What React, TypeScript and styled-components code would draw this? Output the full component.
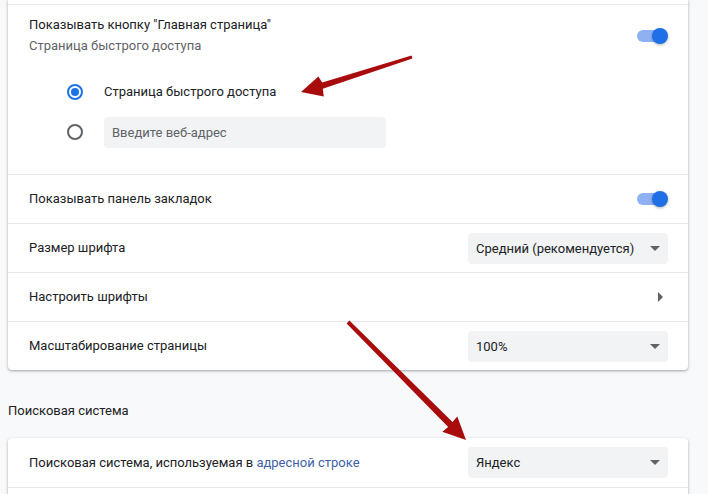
import React from "react";
import styled, { createGlobalStyle } from "styled-components";

const Global = createGlobalStyle`
  html, body { margin: 0; padding: 0; background: #f8f9fa; }
  body { font-family: Roboto, "Noto Sans", Arial, sans-serif; font-size: 13px; color: #202124; }
  * { box-sizing: border-box; }
`;

const Page = styled.div`
  position: relative;
  width: 708px;
  height: 494px;
  overflow: hidden;
  padding: 0 20px 0 8px;
`;

const Card = styled.div<{ $top?: number }>`
  background: #fff;
  border-radius: 4px;
  box-shadow: 0 1px 2px 0 rgba(60, 64, 67, 0.3), 0 1px 3px 1px rgba(60, 64, 67, 0.12);
  margin-top: ${(p) => p.$top ?? 0}px;
`;

const TopCard = styled(Card)`
  border-top-left-radius: 0;
  border-top-right-radius: 0;
  padding-top: 4px;
`;

const Row = styled.div<{ $first?: boolean }>`
  display: flex;
  align-items: center;
  justify-content: space-between;
  min-height: 49px;
  padding: 0 20px 0 21px;
  border-top: ${(p) => (p.$first ? "none" : "1px solid #e6e8eb")};
`;

const HomeRow = styled.div`
  border-top: 1px solid #e6e8eb;
  padding: 10px 20px 22px 21px;
`;

const HomeHead = styled.div`
  display: flex;
  align-items: center;
  justify-content: space-between;
`;

const Label = styled.div`
  line-height: 20px;
  color: #202124;
`;

const Secondary = styled.div`
  line-height: 20px;
  margin-top: 1px;
  color: #5f6368;
`;

const RadioGroup = styled.div`
  display: flex;
  flex-direction: column;
  padding-left: 38px;
  margin-top: 16px;
`;

const RadioRow = styled.div`
  display: flex;
  align-items: center;
  height: 40px;
  gap: 21px;
`;

const Radio = styled.span<{ $checked?: boolean }>`
  width: 16px;
  height: 16px;
  border-radius: 50%;
  border: 2px solid ${(p) => (p.$checked ? "#1a73e8" : "#5f6368")};
  display: flex;
  align-items: center;
  justify-content: center;
  flex: none;
  &::after {
    content: "";
    width: 8px;
    height: 8px;
    border-radius: 50%;
    background: ${(p) => (p.$checked ? "#1a73e8" : "transparent")};
  }
`;

const UrlInput = styled.div`
  width: 282px;
  height: 31px;
  border-radius: 4px;
  background: #f1f3f4;
  color: #5f6368;
  display: flex;
  align-items: center;
  padding-left: 8px;
`;

const Toggle = styled.span`
  position: relative;
  width: 31px;
  height: 16px;
  display: inline-block;
  flex: none;
  &::before {
    content: "";
    position: absolute;
    left: 0;
    top: 2px;
    width: 28px;
    height: 12px;
    border-radius: 6px;
    background: #8fb1f3;
  }
  &::after {
    content: "";
    position: absolute;
    right: 0;
    top: 0;
    width: 16px;
    height: 16px;
    border-radius: 50%;
    background: #1f6fe6;
    box-shadow: 0 1px 3px rgba(0, 0, 0, 0.3);
  }
`;

const Select = styled.div`
  width: 200px;
  height: 31px;
  border-radius: 4px;
  background: #f1f3f4;
  display: flex;
  align-items: center;
  justify-content: space-between;
  padding: 0 8px 0 8px;
  color: #202124;
`;

const DownArrow = styled.span`
  width: 0;
  height: 0;
  border-left: 5px solid transparent;
  border-right: 5px solid transparent;
  border-top: 5px solid #5f6368;
`;

const RightArrow = styled.span`
  width: 0;
  height: 0;
  border-top: 5px solid transparent;
  border-bottom: 5px solid transparent;
  border-left: 5px solid #5f6368;
  margin-right: 5px;
`;

const SectionTitle = styled.div`
  margin-top: 31px;
  line-height: 20px;
  color: #202124;
`;

const Link = styled.span`
  color: #3f5fa9;
`;

const Overlay = styled.svg`
  position: absolute;
  left: 0;
  top: 0;
  pointer-events: none;
`;

export default function App() {
  return (
    <>
      <Global />
      <Page>
        <TopCard>
          <HomeRow>
            <HomeHead>
              <div>
                <Label>Показывать кнопку "Главная страница"</Label>
                <Secondary>Страница быстрого доступа</Secondary>
              </div>
              <Toggle />
            </HomeHead>
            <RadioGroup>
              <RadioRow>
                <Radio $checked />
                <Label>Страница быстрого доступа</Label>
              </RadioRow>
              <RadioRow>
                <Radio />
                <UrlInput>Введите веб-адрес</UrlInput>
              </RadioRow>
            </RadioGroup>
          </HomeRow>
          <Row>
            <Label>Показывать панель закладок</Label>
            <Toggle />
          </Row>
          <Row>
            <Label>Размер шрифта</Label>
            <Select>
              <span>Средний (рекомендуется)</span>
              <DownArrow />
            </Select>
          </Row>
          <Row>
            <Label>Настроить шрифты</Label>
            <RightArrow />
          </Row>
          <Row>
            <Label>Масштабирование страницы</Label>
            <Select>
              <span>100%</span>
              <DownArrow />
            </Select>
          </Row>
        </TopCard>
        <SectionTitle>Поисковая система</SectionTitle>
        <Card $top={17}>
          <Row $first>
            <Label>
              Поисковая система, используемая в <Link>адресной строке</Link>
            </Label>
            <Select>
              <span>Яндекс</span>
              <DownArrow />
            </Select>
          </Row>
          <Row>
            <Label>&nbsp;</Label>
          </Row>
        </Card>
        <Overlay width="708" height="494" viewBox="0 0 708 494">
          <g fill="#a80c0c">
            <polygon points="412.4,58.6 411.6,55.4 322.2,82.6 318.4,76.4 301,92 323.8,96.5 322.8,88.8" />
            <polygon points="346.6,323.4 349.4,320.6 452.5,422.1 457.3,416.5 466,440 442.3,431.7 448.2,427.1" />
          </g>
        </Overlay>
      </Page>
    </>
  );
}
